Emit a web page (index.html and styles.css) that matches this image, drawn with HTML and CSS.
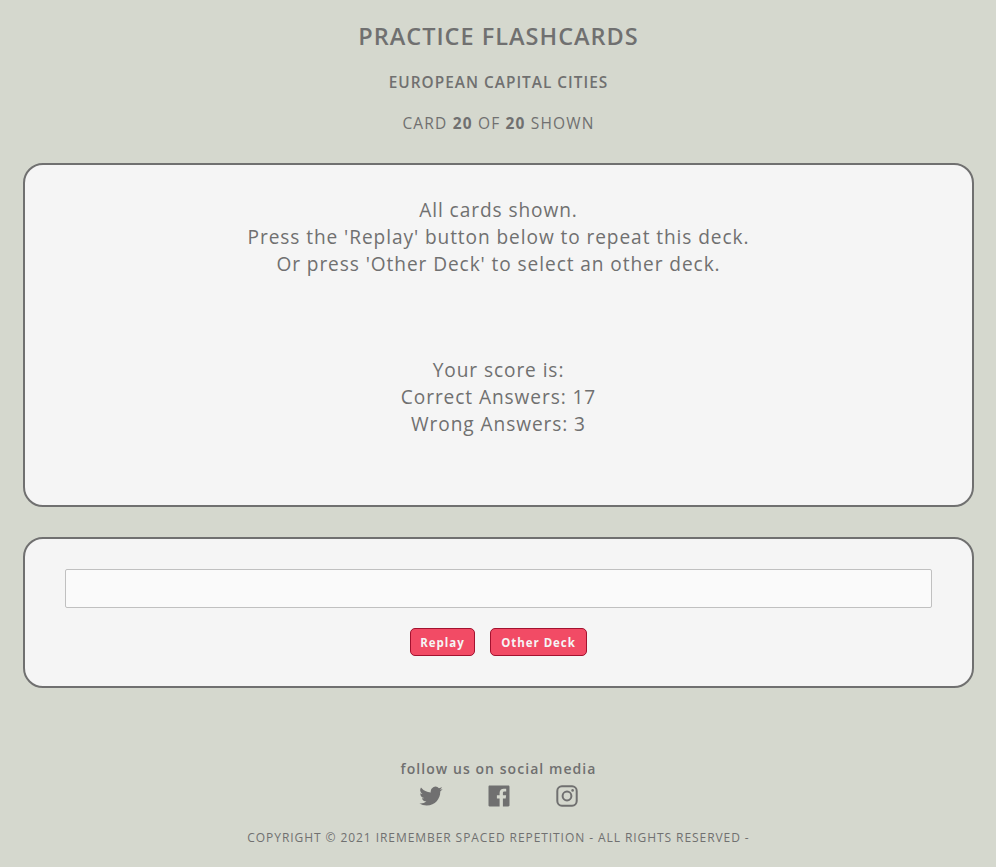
FILE: index.html
```
<!DOCTYPE html>
<html lang="en">
<head>
<meta charset="utf-8">
<title>Practice Flashcards</title>
<link rel="stylesheet" href="styles.css">
</head>
<body>
<header class="header">
  <h1 class="title">PRACTICE FLASHCARDS</h1>
  <h2 class="deck">EUROPEAN CAPITAL CITIES</h2>
  <p class="progress">CARD <b>20</b> OF <b>20</b> SHOWN</p>
</header>
<main>
  <section class="card">
    <p class="message">All cards shown.<br>Press the 'Replay' button below to repeat this deck.<br>Or press 'Other Deck' to select an other deck.</p>
    <p class="score">Your score is:<br>Correct Answers: 17<br>Wrong Answers: 3</p>
  </section>
  <section class="controls">
    <input class="answer" type="text" aria-label="Answer">
    <div class="buttons">
      <button class="btn replay">Replay</button>
      <button class="btn other">Other Deck</button>
    </div>
  </section>
</main>
<footer class="footer">
  <p class="follow">follow us on social media</p>
  <div class="social">
    <svg class="icon" viewBox="0 0 24 24"><path d="M23.64 4.94c-.85.38-1.78.64-2.74.75a4.8 4.8 0 0 0 2.1-2.65 9.6 9.6 0 0 1-3.03 1.16 4.78 4.78 0 0 0-8.14 4.36A13.56 13.56 0 0 1 1.98 3.57a4.78 4.78 0 0 0 1.48 6.38 4.7 4.7 0 0 1-2.16-.6v.06a4.78 4.78 0 0 0 3.83 4.68 4.8 4.8 0 0 1-2.16.08 4.78 4.78 0 0 0 4.46 3.32A9.6 9.6 0 0 1 .36 19.47 13.5 13.5 0 0 0 7.68 21.6c8.78 0 13.58-7.28 13.58-13.6l-.01-.6a9.7 9.7 0 0 0 2.39-2.46z"/></svg>
    <svg class="icon" viewBox="0 0 24 24"><path d="M2.5 1.5h18.8c.7 0 1.2.5 1.2 1.2v18.6c0 .7-.5 1.2-1.2 1.2h-5.4v-8.1h2.8l.4-3.2h-3.2V9.1c0-.9.3-1.5 1.6-1.5h1.7V4.8c-.3 0-1.3-.1-2.5-.1-2.4 0-4.1 1.5-4.1 4.2v2.3H9.9v3.2h2.7v8.1H2.5c-.6 0-1-.5-1-1.2V2.7c0-.7.4-1.2 1-1.2z"/></svg>
    <svg class="icon outline" viewBox="0 0 24 24"><rect x="2.3" y="2.3" width="19.4" height="19.4" rx="4.6"/><circle cx="12" cy="12" r="4.4"/><circle class="dot" cx="17.6" cy="6.4" r="1.3"/></svg>
  </div>
  <p class="copyright">COPYRIGHT © 2021 IREMEMBER SPACED REPETITION - ALL RIGHTS RESERVED -</p>
</footer>
</body>
</html>
```
FILE: styles.css
```
* { box-sizing: border-box; }
body {
  margin: 0;
  background: #d5d8ce;
  color: #707070;
  font-family: "Open Sans", sans-serif;
  letter-spacing: 1px;
  text-align: center;
}
h1, h2, p { margin: 0; }
.header { padding: 20px 0 0 1px; }
.title { font-size: 23.5px; line-height: 32px; font-weight: 600; }
.deck { margin-top: 20px; font-size: 15.4px; line-height: 22px; font-weight: 600; }
.progress { margin-top: 19px; font-size: 15.5px; line-height: 21px; letter-spacing: 1.17px; }
main { display: flex; flex-direction: column; gap: 30px; margin: 29px 22px 0 23px; }
.card, .controls {
  background: #f5f5f5;
  border: 2px solid #707070;
  border-radius: 20px;
}
.card { height: 344px; padding-top: 32px; font-size: 19.1px; line-height: 27px; letter-spacing: 0.92px; }
.score { margin-top: 79px; }
.controls { height: 151px; padding: 30px 40px 0; }
.answer {
  display: block;
  width: 100%;
  height: 39px;
  border: 1px solid #c0c0c0;
  border-radius: 2px;
  background: #fafafa;
}
.buttons { display: flex; justify-content: center; gap: 15px; margin-top: 20px; }
.btn {
  height: 28px;
  padding: 2px 0 0;
  border: 1px solid #a3122f;
  border-radius: 5px;
  background: #f24b65;
  color: #f5f5f5;
  font: 700 11.5px/24px "Open Sans", sans-serif;
  letter-spacing: 0.95px;
}
.replay { width: 65px; }
.other { width: 97px; }
.footer { padding: 71px 0 0 1px; }
.follow { font-size: 14px; line-height: 20px; font-weight: 600; letter-spacing: 1.06px; }
.social { display: flex; justify-content: center; gap: 44px; margin: 5px 0 0; }
.icon { width: 24px; height: 24px; fill: #707070; }
.outline { fill: none; stroke: #707070; stroke-width: 2; }
.dot { fill: #707070; stroke: none; }
.copyright { margin-top: 21px; font-size: 12px; line-height: 18px; letter-spacing: 0.93px; }
```
